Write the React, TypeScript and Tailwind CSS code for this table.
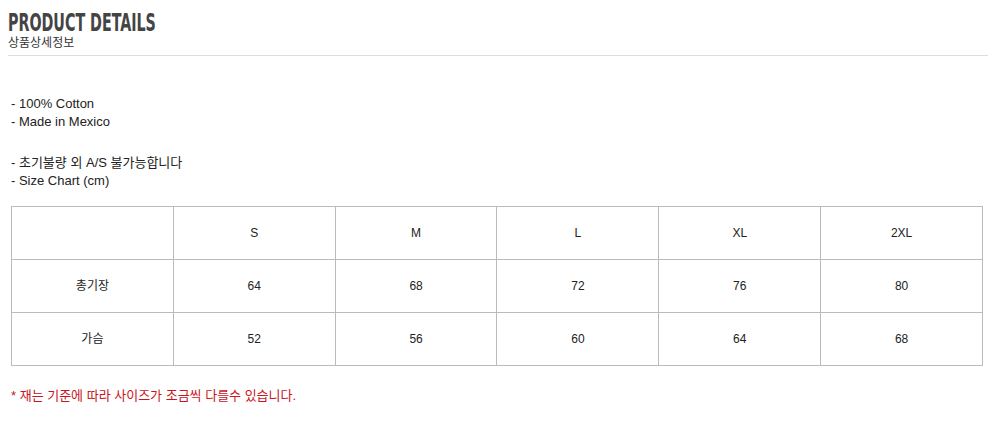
import React from 'react';

const sizes = ['S', 'M', 'L', 'XL', '2XL'];

const rows = [
  { label: '총기장', values: ['64', '68', '72', '76', '80'] },
  { label: '가슴', values: ['52', '56', '60', '64', '68'] },
];

const bodyFont = { fontFamily: '"Liberation Sans", "Noto Sans CJK KR", sans-serif' };

const App: React.FC = () => {
  return (
    <div className="w-[989px] h-[443px] bg-white text-[#333]" style={bodyFont}>
      {/* header */}
      <div className="pl-2 pt-[10px] pr-[1px]">
        <h1
          className="w-max origin-left scale-x-[0.66] text-[24px] leading-[26px] font-bold text-[#444] whitespace-nowrap"
          style={{ fontFamily: '"DejaVu Sans Condensed", "DejaVu Sans", sans-serif' }}
        >
          PRODUCT DETAILS
        </h1>
        <p className="text-[12px] leading-[14px] text-[#333]">상품상세정보</p>
        <div className="mt-[5px] border-t border-[#ddd]" />
      </div>

      {/* description */}
      <div className="pl-[11px] pt-[39px] text-[13px] leading-[18px] text-[#222]">
        <p>- 100% Cotton</p>
        <p>- Made in Mexico</p>
        <p className="mt-[23px]">- 초기불량 외 A/S 불가능합니다</p>
        <p>- Size Chart (cm)</p>
      </div>

      {/* size table */}
      <table className="ml-[11px] mt-[16px] w-[972px] border-collapse table-fixed text-[12px] text-[#222]">
        <tbody>
          <tr className="h-[53px]">
            <td className="border border-[#bbb]" />
            {sizes.map((s) => (
              <td key={s} className="border border-[#bbb] text-center">
                {s}
              </td>
            ))}
          </tr>
          {rows.map((row) => (
            <tr key={row.label} className="h-[53px]">
              <td className="border border-[#bbb] text-center">{row.label}</td>
              {row.values.map((v, i) => (
                <td key={i} className="border border-[#bbb] text-center">
                  {v}
                </td>
              ))}
            </tr>
          ))}
        </tbody>
      </table>

      <p className="pl-[11px] mt-[21px] text-[13px] leading-[18px] text-[#c8161d]">
        * 재는 기준에 따라 사이즈가 조금씩 다를수 있습니다.
      </p>
    </div>
  );
};

export default App;
